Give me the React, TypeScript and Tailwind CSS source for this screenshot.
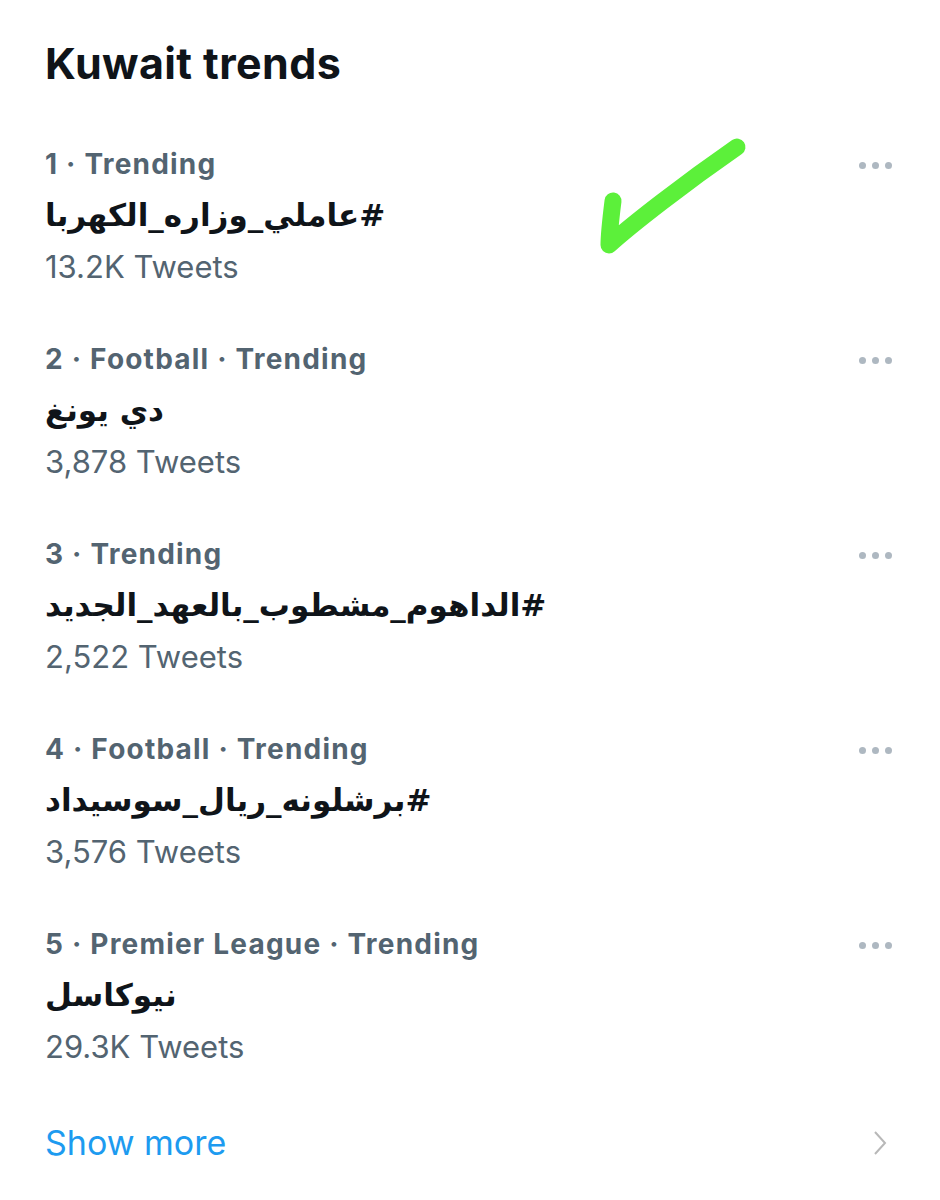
import React from "react";

const trends = [
  { meta: "1 · Trending", name: "#عاملي_وزاره_الكهربا", count: "13.2K Tweets" },
  { meta: "2 · Football · Trending", name: "دي يونغ", count: "3,878 Tweets" },
  { meta: "3 · Trending", name: "#الداهوم_مشطوب_بالعهد_الجديد", count: "2,522 Tweets" },
  { meta: "4 · Football · Trending", name: "#برشلونه_ريال_سوسيداد", count: "3,576 Tweets" },
  { meta: "5 · Premier League · Trending", name: "نيوكاسل", count: "29.3K Tweets" },
];

const Dots = () => (
  <div className="flex items-center gap-[6px] pt-[1px]">
    <span className="w-[7px] h-[7px] rounded-full bg-[#aeb8c1]" />
    <span className="w-[7px] h-[7px] rounded-full bg-[#aeb8c1]" />
    <span className="w-[7px] h-[7px] rounded-full bg-[#aeb8c1]" />
  </div>
);

const App = () => {
  return (
    <div
      className="relative w-[940px] h-[1200px] bg-white pl-[45px] pr-[48px] pt-[37px]"
      style={{ fontFamily: "Inter, 'Liberation Sans', sans-serif" }}
    >
      <h1 className="text-[43px] leading-[52px] font-bold text-[#0f1419] tracking-[0.4px]">
        Kuwait trends
      </h1>

      <div className="mt-[50px] flex flex-col gap-[42px]">
        {trends.map((t) => (
          <div key={t.meta} className="flex justify-between">
            <div className="flex flex-col">
              <div className="text-[28px] leading-[51px] font-bold text-[#536471] tracking-[1.2px]">
                {t.meta}
              </div>
              <div
                className="text-[31px] leading-[51px] font-bold text-[#0f1419]"
                style={{ fontFamily: "'DejaVu Sans', 'Noto Sans', sans-serif" }}
              >
                <span dir="rtl">{t.name}</span>
              </div>
              <div className="text-[31px] leading-[51px] text-[#536471]">{t.count}</div>
            </div>
            <div className="h-[51px] flex items-center">
              <Dots />
            </div>
          </div>
        ))}
      </div>

      <div className="mt-[45px] flex justify-between items-center h-[51px]">
        <span className="text-[34px] text-[#1d9bf0]">Show more</span>
        <svg width="16" height="26" viewBox="0 0 16 26" className="mr-[4px]">
          <path d="M3 2 L13 13 L3 24" fill="none" stroke="#b8b8b8" strokeWidth="2" />
        </svg>
      </div>

      <svg
        className="absolute left-[595px] top-[135px]"
        width="160"
        height="125"
        viewBox="0 0 160 125"
      >
        <path
          d="M18 66 C16 82 14 98 14 110 C36 90 90 48 142 12"
          fill="none"
          stroke="#5cf03a"
          strokeWidth="17"
          strokeLinecap="round"
          strokeLinejoin="round"
        />
      </svg>
    </div>
  );
};

export default App;
